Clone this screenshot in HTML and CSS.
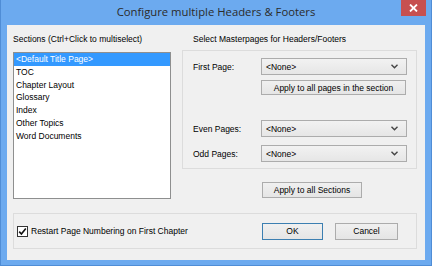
FILE: index.html
```html
<!DOCTYPE html>
<html lang="en">
<head>
  <meta charset="UTF-8" />
  <title>Configure multiple Headers &amp; Footers</title>
  <link rel="stylesheet" href="styles.css">
</head>
<body>
  <div class="window">
    <div class="titlebar">
      <div class="title">Configure multiple Headers &amp; Footers</div>
      <button class="close" type="button">
        <svg width="9" height="8" viewBox="0 0 9 8"><path d="M1 0.5 L8 7.5 M8 0.5 L1 7.5" stroke="#fff" stroke-width="1.8"/></svg>
      </button>
    </div>

    <div class="client">
      <div class="columns">
        <div class="col-sections">
          <div class="caption">Sections (Ctrl+Click to multiselect)</div>
          <ul class="listbox">
            <li class="selected">&lt;Default Title Page&gt;</li>
            <li>TOC</li>
            <li>Chapter Layout</li>
            <li>Glossary</li>
            <li>Index</li>
            <li>Other Topics</li>
            <li>Word Documents</li>
          </ul>
        </div>

        <div class="col-masters">
          <div class="caption caption-masters">Select Masterpages for Headers/Footers</div>
          <div class="panel">
            <div class="field">
              <span class="field-label">First Page:</span>
              <div class="combo"><span>&lt;None&gt;</span><svg class="chev" width="7" height="5" viewBox="0 0 7 5"><path d="M0.5 0.8 L3.5 3.8 L6.5 0.8" fill="none" stroke="#444" stroke-width="1.4"/></svg></div>
            </div>
            <div class="field field-apply">
              <span class="field-label"></span>
              <button class="btn btn-wide" type="button">Apply to all pages in the section</button>
            </div>
            <div class="field field-even">
              <span class="field-label">Even Pages:</span>
              <div class="combo"><span>&lt;None&gt;</span><svg class="chev" width="7" height="5" viewBox="0 0 7 5"><path d="M0.5 0.8 L3.5 3.8 L6.5 0.8" fill="none" stroke="#444" stroke-width="1.4"/></svg></div>
            </div>
            <div class="field field-odd">
              <span class="field-label">Odd Pages:</span>
              <div class="combo"><span>&lt;None&gt;</span><svg class="chev" width="7" height="5" viewBox="0 0 7 5"><path d="M0.5 0.8 L3.5 3.8 L6.5 0.8" fill="none" stroke="#444" stroke-width="1.4"/></svg></div>
            </div>
          </div>
          <button class="btn btn-sections" type="button">Apply to all Sections</button>
        </div>
      </div>

      <div class="footer-panel">
        <label class="check">
          <span class="checkbox">
            <svg width="9" height="9" viewBox="0 0 9 9"><path d="M1.2 4.6 L3.4 7 L7.8 1.4" fill="none" stroke="#111" stroke-width="1.6"/></svg>
          </span>
          Restart Page Numbering on First Chapter
        </label>
        <div class="actions">
          <button class="btn btn-ok" type="button">OK</button>
          <button class="btn btn-cancel" type="button">Cancel</button>
        </div>
      </div>
    </div>
  </div>
</body>
</html>
```

FILE: styles.css
```css
:root {
  --frame: #6caaef;
  --frame-edge: #4f8dd6;
  --face: #f0f0f0;
  --line: #dcdcdc;
  --btn-border: #acacac;
  --select: #3399ff;
}

* {
  box-sizing: border-box;
  margin: 0;
  padding: 0;
}

html, body {
  width: 432px;
  height: 266px;
  overflow: hidden;
  font-family: "Liberation Sans", Arial, sans-serif;
  font-size: 8.5px;
  color: #000;
}

.window {
  width: 432px;
  height: 266px;
  background: var(--frame);
  border: 1px solid var(--frame-edge);
  border-top: none;
  display: flex;
  flex-direction: column;
}

.titlebar {
  height: 25px;
  display: grid;
  grid-template-columns: 1fr auto 1fr;
  align-items: start;
}

.title {
  grid-column: 2;
  font-family: "Open Sans", "Noto Sans", sans-serif;
  font-size: 11.3px;
  line-height: 24px;
  color: #2b2b2b;
}

.close {
  grid-column: 3;
  justify-self: end;
  width: 25px;
  height: 16px;
  margin-right: 5px;
  border: none;
  background: #c75050;
  display: flex;
  align-items: center;
  justify-content: center;
}

.client {
  flex: 1;
  margin: 0 6px 5px 6px;
  background: var(--face);
  padding: 8px 0 0 6px;
}

.columns {
  display: grid;
  grid-template-columns: 158px 235px;
  column-gap: 11px;
}

.caption {
  line-height: 13px;
  height: 13px;
  white-space: nowrap;
}

.caption-masters {
  padding-left: 11px;
  margin-bottom: 4px;
}

.col-sections .caption {
  margin-bottom: 6px;
}

.listbox {
  list-style: none;
  height: 147px;
  background: #fff;
  border: 1px solid #8e8f8f;
  padding: 0;
}

.listbox li {
  height: 12.8px;
  line-height: 13px;
  padding-left: 2px;
  white-space: nowrap;
}

.listbox li.selected {
  background: var(--select);
  color: #fff;
}

.panel {
  height: 119px;
  border: 1px solid var(--line);
  padding: 7px 0 0 10px;
}

.field {
  display: flex;
  align-items: center;
}

.field-label {
  width: 68px;
  flex: none;
}

.field-apply { margin-top: 5px; }
.field-even { margin-top: 25px; }
.field-odd { margin-top: 8px; }

.combo {
  width: 146px;
  height: 17px;
  border: 1px solid var(--btn-border);
  background: linear-gradient(#f2f2f2, #e6e6e6);
  display: flex;
  align-items: center;
  justify-content: space-between;
  padding: 0 8px 0 4px;
}

.btn {
  font-family: inherit;
  font-size: 8.5px;
  color: #000;
  border: 1px solid var(--btn-border);
  background: linear-gradient(#f0f0f0, #e5e5e5);
  height: 16px;
  display: flex;
  align-items: center;
  justify-content: center;
}

.btn-wide {
  width: 145px;
  height: 15px;
}

.btn-sections {
  width: 100px;
  margin: 13px 0 0 80px;
}

.footer-panel {
  margin-top: 14px;
  width: 404px;
  height: 36px;
  border: 1px solid var(--line);
  display: flex;
  align-items: center;
  justify-content: space-between;
  padding: 0 18px 0 3px;
}

.check {
  display: flex;
  align-items: center;
  gap: 3px;
  white-space: nowrap;
}

.checkbox {
  width: 11px;
  height: 11px;
  border: 1px solid #333;
  background: #fff;
  display: flex;
  align-items: center;
  justify-content: center;
}

.actions {
  display: flex;
  gap: 12px;
}

.btn-ok {
  width: 61px;
  height: 17px;
  border-color: #3c7fb1;
}

.btn-cancel {
  width: 63px;
  height: 17px;
}
```
